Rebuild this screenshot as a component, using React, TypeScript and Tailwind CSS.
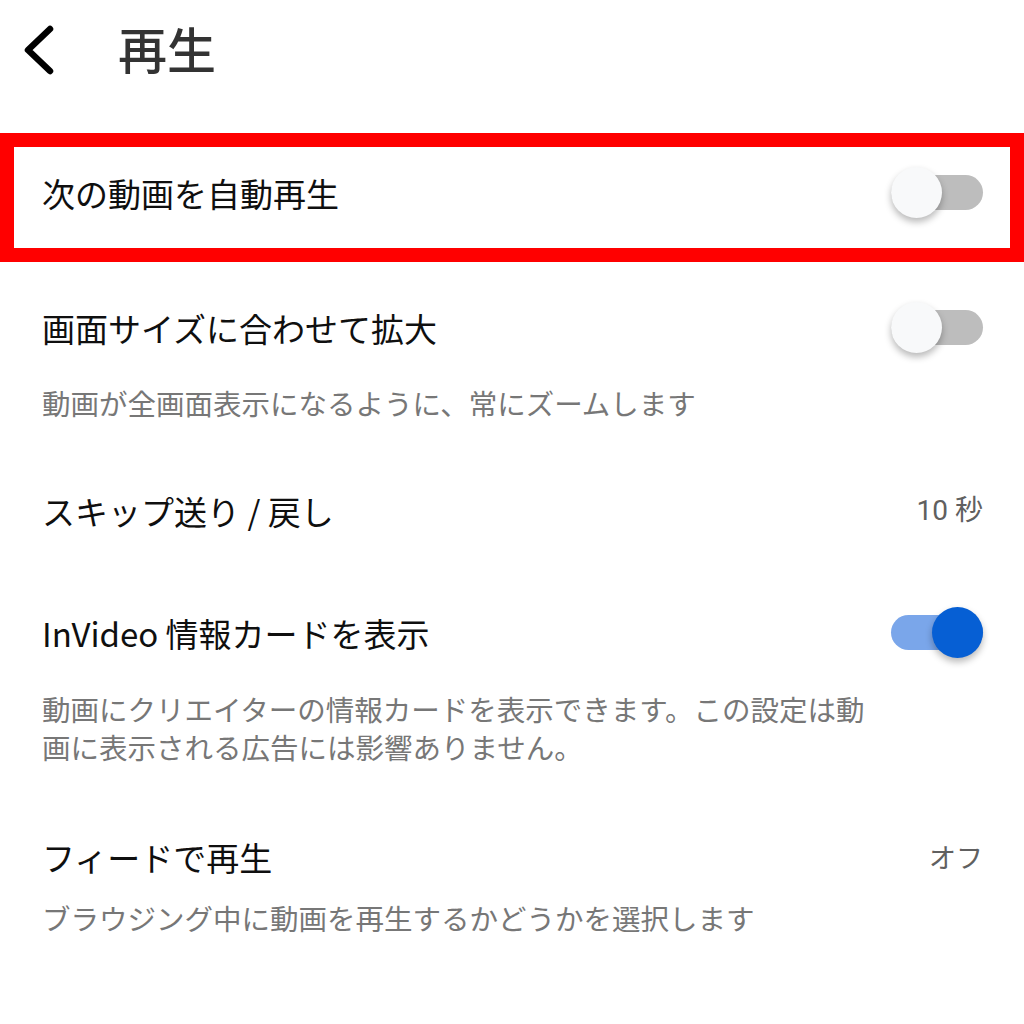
import React from "react";

const font = { fontFamily: '"Noto Sans CJK JP", "Noto Sans", sans-serif' };
const valueFont = { fontFamily: 'Roboto, "Noto Sans CJK JP", sans-serif' };

function Toggle({ on }: { on: boolean }) {
  return (
    <div className="relative h-[52px] w-[92px] shrink-0">
      <div
        className={
          "absolute left-0 top-[8px] h-[35px] w-[92px] rounded-full " +
          (on ? "bg-[#7aa6ea]" : "bg-[#bdbdbd]")
        }
      />
      <div
        className={
          "absolute top-0 h-[51px] w-[51px] rounded-full shadow-[0_4px_7px_rgba(0,0,0,0.28)] " +
          (on ? "right-0 bg-[#065fd4]" : "left-0 bg-[#f8f9fa]")
        }
      />
    </div>
  );
}

function Label({ children }: { children: React.ReactNode }) {
  return <div className="text-[33px] leading-[60px] text-[#0f0f0f]">{children}</div>;
}

function Desc({ children, className = "" }: { children: React.ReactNode; className?: string }) {
  return (
    <p className={"max-w-[840px] text-[28.5px] leading-[38px] text-[#777777] " + className}>
      {children}
    </p>
  );
}

export default function App() {
  return (
    <div className="h-[1024px] w-[1024px] overflow-hidden bg-white" style={font}>
      {/* header */}
      <header className="flex h-[133px] items-start pt-[18px]">
        <svg width="60" height="60" viewBox="0 0 60 60" className="ml-[14px] mt-[2px]">
          <path
            d="M36 9 L14 30 L36 51"
            fill="none"
            stroke="#000"
            strokeWidth="6.5"
            strokeLinecap="round"
            strokeLinejoin="round"
          />
        </svg>
        <h1 className="ml-[44px] text-[49px] font-medium leading-[60px] text-[#333333]">再生</h1>
      </header>

      {/* highlighted row */}
      <div className="border-[14px] border-[#ff0000]">
        <div className="flex h-[101px] items-center justify-between pb-[10px] pl-[28px] pr-[27px]">
          <Label>次の動画を自動再生</Label>
          <Toggle on={false} />
        </div>
      </div>

      <div className="px-[42px] pr-[41px]">
        <section className="pt-[36px]">
          <div className="flex items-center justify-between">
            <Label>画面サイズに合わせて拡大</Label>
            <Toggle on={false} />
          </div>
          <Desc className="mt-[26px]">動画が全画面表示になるように、常にズームします</Desc>
        </section>

        <section className="pt-[59px]">
          <div className="flex items-center justify-between">
            <Label>スキップ送り / 戻し</Label>
            <span className="text-[28px] text-[#606060]" style={valueFont}>10 秒</span>
          </div>
        </section>

        <section className="pt-[62px]">
          <div className="flex items-center justify-between">
            <Label>InVideo 情報カードを表示</Label>
            <Toggle on={true} />
          </div>
          <Desc className="mt-[27px]">
            動画にクリエイターの情報カードを表示できます。この設定は動画に表示される広告には影響ありません。
          </Desc>
        </section>

        <section className="pt-[61px]">
          <div className="flex items-center justify-between">
            <Label>フィードで再生</Label>
            <span className="text-[27px] text-[#606060]">オフ</span>
          </div>
          <Desc className="mt-[12px]">ブラウジング中に動画を再生するかどうかを選択します</Desc>
        </section>
      </div>
    </div>
  );
}
